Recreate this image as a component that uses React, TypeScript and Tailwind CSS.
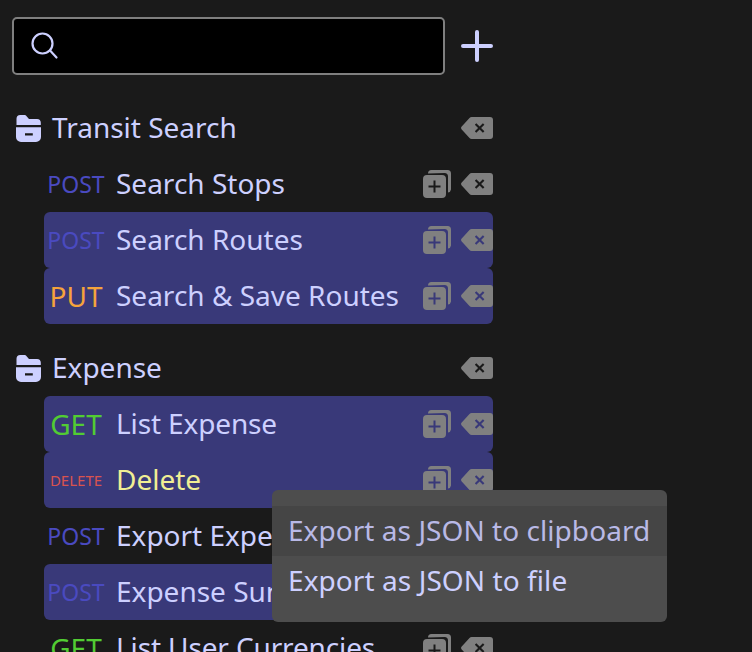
const lav = "#cdd0ff";

function FolderIcon() {
  return (
    <svg width="25" height="27" viewBox="0 0 25 27" className="shrink-0">
      <path d="M0.500 10V3.800A3.800 3.800 0 0 1 4.300 0H8C9.200 0 10 .5 10.800 1.400L13 4H21A3.800 3.800 0 0 1 24.800 7.800V10Z" fill={lav} />
      <path fillRule="evenodd" clipRule="evenodd" d="M0 12.300H25V22A5 5 0 0 1 20 27H5A5 5 0 0 1 0 22ZM9 18.300V20.500H16.800V18.300Z" fill={lav} />
    </svg>
  );
}

function BackspaceIcon() {
  return (
    <svg width="32" height="22" viewBox="0 0 32 22" className="shrink-0">
      <path fillRule="evenodd" clipRule="evenodd" fill="#808080" d="M8.500 1A3 3 0 0 1 10.700 0H29A3 3 0 0 1 32 3V19A3 3 0 0 1 29 22H10.700A3 3 0 0 1 8.500 21L0.500 12.200A2 2 0 0 1 0.500 9.800ZM15.300 6.200L13.800 7.700L17.100 11L13.800 14.300L15.300 15.800L18.600 12.500L21.900 15.800L23.400 14.300L20.100 11L23.400 7.700L21.900 6.200L18.600 9.500Z" />
    </svg>
  );
}

function DuplicateIcon() {
  return (
    <svg width="28" height="28" viewBox="0 0 28 28" className="shrink-0">
      <path fill="#808080" d="M5 3.500A3.500 3.500 0 0 1 8.500 0H24.500A3.500 3.500 0 0 1 28 3.500V19.500A3.500 3.500 0 0 1 25 22.500V6.500A3.500 3.500 0 0 0 21.500 3Z" />
      <path fillRule="evenodd" clipRule="evenodd" fill="#808080" d="M4 5H19A4 4 0 0 1 23 9V24A4 4 0 0 1 19 28H4A4 4 0 0 1 0 24V9A4 4 0 0 1 4 5ZM10.500 10.500V15.500H5.500V17.500H10.500V22.500H12.500V17.500H17.500V15.500H12.500V10.500Z" />
    </svg>
  );
}

type Row = { m: string; mc: string; mSize: string; name: string; sel?: boolean; active?: boolean; tight?: boolean };

const POST = "#4a4ac0";
const GET = "#52cc33";
const PUT = "#f5a33c";
const DEL = "#d9534f";

function ReqRow({ m, mc, mSize, name, sel, active, tight }: Row) {
  return (
    <div className={`ml-[44px] w-[449px] h-[56px] shrink-0 flex items-center rounded-[6px] ${sel ? "bg-[#393979]" : ""}`}>
      <div className={`w-[64px] mr-[8px] shrink-0 text-center leading-none ${mSize}`} style={{ color: mc }}>
        {m}
      </div>
      <div className={`flex-1 pb-[2px] text-[28px] leading-none whitespace-nowrap ${tight ? "tracking-[-0.13px]" : ""} ${active ? "text-[#f0ee94]" : "text-[#cdd0ff]"}`}>{name}</div>
      <div className="flex items-center gap-[10px]">
        <DuplicateIcon />
        <BackspaceIcon />
      </div>
    </div>
  );
}

function Folder({ name }: { name: string }) {
  return (
    <div className="ml-[16px] w-[477px] h-[56px] shrink-0 flex items-center">
      <FolderIcon />
      <div className="ml-[11px] flex-1 pb-[2px] text-[28px] leading-none text-[#cdd0ff]">{name}</div>
      <BackspaceIcon />
    </div>
  );
}

export default function App() {
  return (
    <div
      className="relative w-[752px] h-[652px] overflow-hidden bg-[#1a1a1a]"
      style={{ fontFamily: '"Noto Sans", sans-serif' }}
    >
      <div className="flex items-center pt-[17px] pl-[12px]">
        <div className="w-[433px] h-[58px] bg-black border-2 border-[#7f7f7f] rounded-[5px] flex items-center pl-[17px]">
          <svg width="30" height="30" viewBox="0 0 30 30" fill="none" stroke={lav} strokeWidth="2.200" strokeLinecap="round">
            <circle cx="11.500" cy="12.500" r="10" />
            <path d="M19.500 20L25.500 26.500" />
          </svg>
        </div>
        <svg width="32" height="32" viewBox="0 0 32 32" className="ml-[16px]" fill="none" stroke={lav} strokeWidth="4" strokeLinecap="round">
          <path d="M16 2V30M2 16H30" />
        </svg>
      </div>

      <div className="flex flex-col pt-[25px]">
        <Folder name="Transit Search" />
        <ReqRow m="POST" mc={POST} mSize="text-[23px]" name="Search Stops" />
        <ReqRow m="POST" mc={POST} mSize="text-[23px]" name="Search Routes" sel />
        <ReqRow m="PUT" mc={PUT} mSize="text-[28px]" name="Search & Save Routes" sel />
        <div className="h-[16px] shrink-0" />
        <Folder name="Expense" />
        <ReqRow m="GET" mc={GET} mSize="text-[28px]" name="List Expense" sel tight />
        <ReqRow m="DELETE" mc={DEL} mSize="text-[15px]" name="Delete" sel active />
        <ReqRow m="POST" mc={POST} mSize="text-[23px]" name="Export Expense" />
        <ReqRow m="POST" mc={POST} mSize="text-[23px]" name="Expense Summary" sel />
        <ReqRow m="GET" mc={GET} mSize="text-[28px]" name="List User Currencies" tight />
      </div>

      <div className="absolute left-[272px] top-[490px] w-[395px] h-[132px] py-[16px] bg-[#4d4d4d] rounded-[6px]">
        <div className="h-[50px] bg-[#454545] flex items-center pl-[16px] pb-[2px] text-[28px] tracking-[0.05px] leading-none text-[#b9b9e6]">
          Export as JSON to clipboard
        </div>
        <div className="h-[50px] flex items-center pl-[16px] pb-[2px] text-[28px] tracking-[0.08px] leading-none text-[#cdd0ff]">
          Export as JSON to file
        </div>
      </div>
    </div>
  );
}
